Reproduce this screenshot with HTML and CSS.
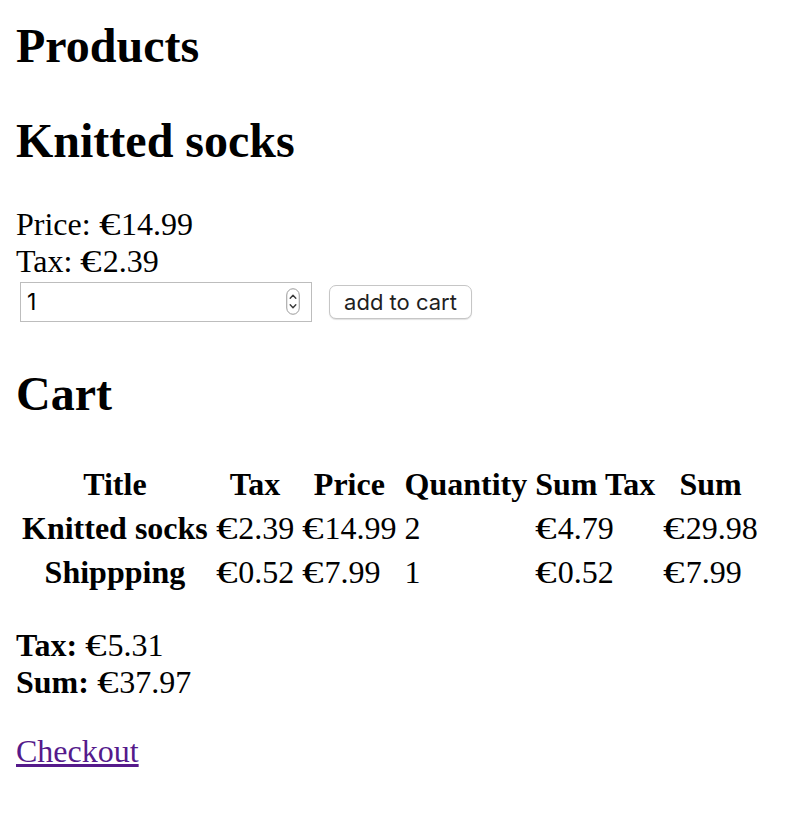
FILE: index.html
```html
<!DOCTYPE html>
<html lang="en">
<head>
<meta charset="utf-8">
<title>Products</title>
<link rel="stylesheet" href="styles.css">
</head>
<body>
<div class="page">
  <section class="products">
    <h1 class="title">Products</h1>
    <div class="product">
      <h2 class="heading product-heading">Knitted socks</h2>
      <div class="line">Price: <span class="eur"><span class="eur-glyph">€</span></span>14.99</div>
      <div class="line">Tax: <span class="eur"><span class="eur-glyph">€</span></span>2.39</div>
      <form class="cart-form">
        <div class="qty">
          <input class="qty-input" type="text" value="1">
          <svg class="spinner" width="14" height="27" viewBox="0 0 14 27">
            <rect x="0.75" y="0.75" width="12.5" height="25.5" rx="6.25" fill="#fff" stroke="#9a9a9a" stroke-width="1"/>
            <path d="M4.2 10.2 L7 7.2 L9.8 10.2" fill="none" stroke="#3a3a3a" stroke-width="1.4" stroke-linecap="round" stroke-linejoin="round"/>
            <path d="M4.2 16.8 L7 19.8 L9.8 16.8" fill="none" stroke="#3a3a3a" stroke-width="1.4" stroke-linecap="round" stroke-linejoin="round"/>
          </svg>
        </div>
        <button class="add-btn" type="button">add to cart</button>
      </form>
    </div>
  </section>
  <h2 class="heading">Cart</h2>
  <table class="cart-table">
    <thead>
      <tr><th>Title</th><th>Tax</th><th>Price</th><th>Quantity</th><th>Sum Tax</th><th>Sum</th></tr>
    </thead>
    <tbody>
      <tr><th>Knitted socks</th><td><span class="eur"><span class="eur-glyph">€</span></span>2.39</td><td><span class="eur"><span class="eur-glyph">€</span></span>14.99</td><td>2</td><td><span class="eur"><span class="eur-glyph">€</span></span>4.79</td><td><span class="eur"><span class="eur-glyph">€</span></span>29.98</td></tr>
      <tr><th>Shippping</th><td><span class="eur"><span class="eur-glyph">€</span></span>0.52</td><td><span class="eur"><span class="eur-glyph">€</span></span>7.99</td><td>1</td><td><span class="eur"><span class="eur-glyph">€</span></span>0.52</td><td><span class="eur"><span class="eur-glyph">€</span></span>7.99</td></tr>
    </tbody>
  </table>
  <p class="totals"><b>Tax:</b> <span class="eur"><span class="eur-glyph">€</span></span>5.31<br><b>Sum:</b> <span class="eur"><span class="eur-glyph">€</span></span>37.97</p>
  <p class="checkout"><a class="checkout-link" href="#">Checkout</a></p>
</div>
</body>
</html>
```

FILE: styles.css
```css
html, body {
  margin: 0;
  background: #fff;
}
body {
  font-family: "Liberation Serif", "Times New Roman", serif;
  font-size: 32px;
  color: #000;
}
.page {
  padding: 18px 16px 16px;
}
.title {
  font-size: 48px;
  font-weight: bold;
  margin: 0;
}
.heading {
  font-size: 48px;
  font-weight: bold;
  margin: 39.84px 0;
}
.product-heading {
  margin-bottom: 38px;
}
.eur {
  display: inline-block;
  width: 0.7em;
}
.eur-glyph {
  display: inline-block;
  transform: scaleX(1.35);
  transform-origin: left center;
}
.line {
  margin: 0;
}
.cart-form {
  display: flex;
  align-items: flex-start;
  height: 46px;
  margin: 0;
}
.qty {
  position: relative;
  margin: 2px 0 0 4px;
}
.qty-input {
  display: block;
  box-sizing: border-box;
  width: 292px;
  height: 40px;
  margin: 0;
  padding: 0 6px;
  border: 1px solid #bdbdbd;
  border-radius: 0;
  font-family: Inter, "Liberation Sans", sans-serif;
  font-size: 23px;
  color: #000;
  background: #fff;
  outline: none;
}
.spinner {
  position: absolute;
  top: 6px;
  right: 12px;
}
.add-btn {
  box-sizing: border-box;
  height: 34px;
  width: 143px;
  margin: 5px 0 0 17px;
  padding: 0;
  border: 1px solid #c6c6c6;
  border-radius: 7px;
  background: #fff;
  box-shadow: 0 1px 1px rgba(0, 0, 0, 0.12);
  font-family: Inter, "Liberation Sans", sans-serif;
  font-size: 22px;
  color: #1f1f1f;
}
.cart-table {
  border-spacing: 4px;
  border-collapse: separate;
}
.cart-table th,
.cart-table td {
  padding: 2px;
}
.cart-table tbody th,
.cart-table tbody td {
  line-height: 35.5px;
}
.cart-table th {
  font-weight: bold;
  text-align: center;
}
.cart-table td {
  text-align: left;
}
.totals {
  margin: 30.5px 0 32px;
}
.checkout {
  margin: 32px 0;
}
.checkout-link {
  color: #551a8b;
  text-decoration: underline;
}
```
